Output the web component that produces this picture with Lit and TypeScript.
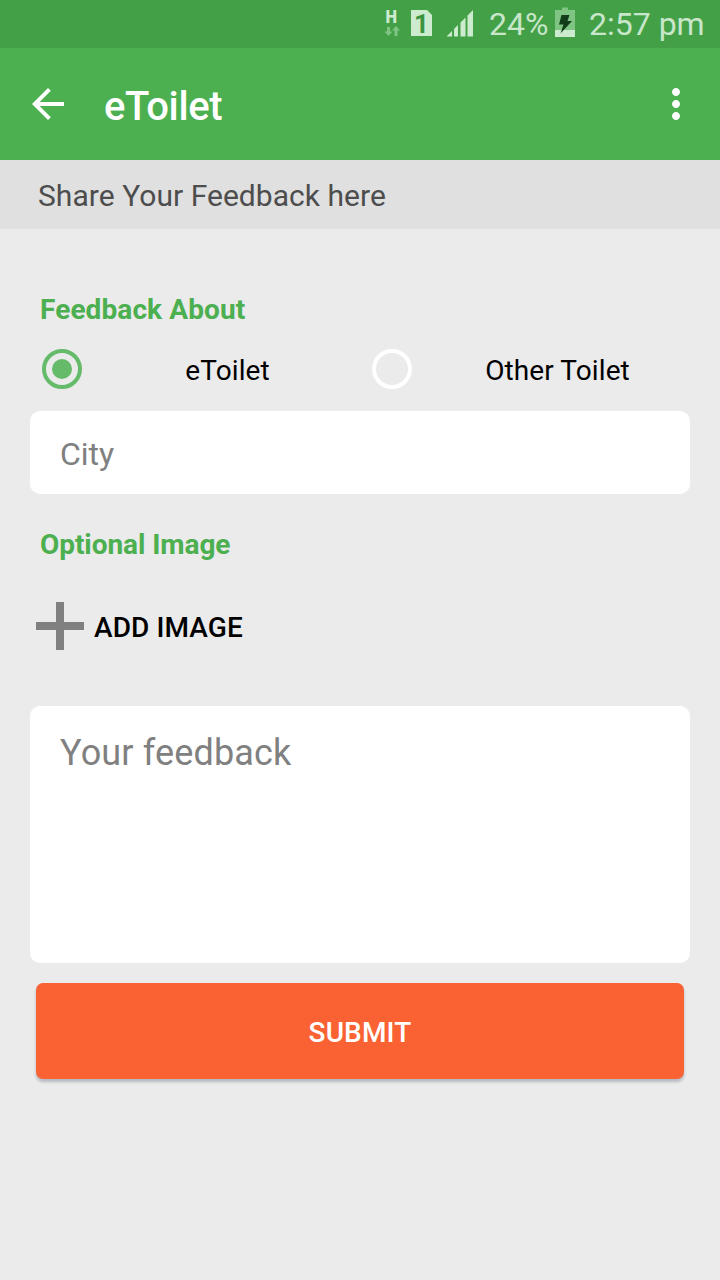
import { LitElement, html, css } from "lit";
import { customElement, state } from "lit/decorators.js";

@customElement("status-bar")
class StatusBar extends LitElement {
  static styles = css`
    :host {
      display: flex;
      height: 48px;
      background: #43a047;
      color: #c8e6c9;
      font-size: 32px;
      line-height: 48px;
      white-space: pre;
    }
    .icons {
      display: block;
      width: 93px;
      height: 48px;
      margin-left: 384px;
    }
    .network {
      font: 900 17.5px Roboto, sans-serif;
    }
    .sim {
      font: 700 26px Roboto, sans-serif;
      fill: #3b9340;
    }
    .percent {
      width: 64px;
      padding-left: 12px;
    }
    .battery {
      display: block;
      width: 20px;
      height: 48px;
      margin-left: 2px;
    }
    .time {
      margin-left: 14px;
    }
  `;
  render() {
    return html`
      <svg class="icons" viewBox="384 0 93 48">
        <g fill="#cdebce">
          <text class="network" x="385.500" y="22.500" textLength="11.500" lengthAdjust="spacingAndGlyphs">H</text>
          <path fill="#7fc482" d="M387 27h3v4.500h2.500l-4 4.500-4-4.500h2.500zM394.500 36v-5.500H392l4-4.500 4 4.500h-2.500V36z" />
          <path d="M411 10h16l5 5v21h-21z" />
          <text class="sim" x="414" y="32.500">1</text>
          <path d="M446.500 36.500l5.500-5.500v5.500zM454 29l4-4v11.500h-4zM460.500 22.500l5-5v19h-5zM467.500 15.500l5.500-5.500v26.500h-5.500z" />
        </g>
      </svg>
      <span class="percent">24%</span>
      <svg class="battery" viewBox="555 0 20 48">
        <path fill="#7fc482" d="M555 10h7V7.500h6V10h7v20h-20z" />
        <path fill="#cdebce" d="M555 30h20v7h-20z" />
        <path fill="#123d18" d="M561.500 15h8l-2 6h4.500l-11.500 12.500 3-9h-4.500z" />
      </svg>
      <span class="time">2:57 pm</span>
    `;
  }
}

@customElement("app-bar")
class AppBar extends LitElement {
  static styles = css`
    :host {
      display: flex;
      align-items: center;
      height: 112px;
      background: #4caf50;
      color: #fff;
    }
    svg {
      display: block;
      width: 48px;
      height: 48px;
      fill: currentColor;
    }
    .back {
      margin-left: 24px;
    }
    .title {
      margin: 0 auto 0 32px;
      padding-top: 6px;
      font-size: 40px;
      font-weight: 500;
      letter-spacing: -0.4px;
      line-height: 48px;
    }
    .more {
      margin-right: 20px;
    }
  `;
  render() {
    return html`
      <svg class="back" viewBox="0 0 24 24">
        <path d="M20 11H7.830l5.590-5.590L12 4l-8 8 8 8 1.410-1.410L7.830 13H20v-2z" />
      </svg>
      <span class="title">eToilet</span>
      <svg class="more" viewBox="0 0 24 24">
        <path d="M12 8c1.100 0 2-.9 2-2s-.9-2-2-2-2 .9-2 2 .9 2 2 2zm0 2c-1.100 0-2 .9-2 2s.9 2 2 2 2-.9 2-2-.9-2-2-2zm0 6c-1.100 0-2 .9-2 2s.9 2 2 2 2-.9 2-2-.9-2-2-2z" />
      </svg>
    `;
  }
}

@customElement("app-root")
class AppRoot extends LitElement {
  static styles = css`
    :host {
      display: block;
      height: 1280px;
      overflow: hidden;
      background: #ebebeb;
      font-family: Roboto, sans-serif;
    }
    .banner {
      height: 69px;
      padding-left: 38px;
      background: #e0e0e0;
      color: #4d4d4d;
      font-size: 30px;
      letter-spacing: 0.04px;
      line-height: 71px;
    }
    .form {
      display: flex;
      flex-direction: column;
      padding: 61px 30px 0;
    }
    .label {
      padding-left: 10px;
      color: #4caf50;
      font-size: 28px;
      font-weight: 700;
      line-height: 40px;
    }
    .about {
      letter-spacing: 0.1px;
    }
    .image {
      letter-spacing: -0.07px;
    }
    .options {
      display: grid;
      grid-template-columns: 1fr 1fr;
      height: 64px;
      margin: 7px 0 10px;
    }
    .option {
      display: flex;
      align-items: center;
      font-size: 28px;
      letter-spacing: 0.1px;
    }
    .option svg {
      width: 64px;
      height: 64px;
    }
    .option span {
      flex: 1;
      padding: 2px 0 0 1px;
      text-align: center;
    }
    .field {
      box-sizing: border-box;
      padding: 0 30px;
      border-radius: 10px;
      background: #fff;
      color: #808080;
    }
    .city {
      height: 83px;
      margin-bottom: 31px;
      font-size: 32px;
      line-height: 86px;
    }
    .add {
      display: flex;
      align-items: center;
      gap: 10px;
      height: 48px;
      margin: 37px 0 56px 6px;
      font-size: 28px;
      font-weight: 500;
      letter-spacing: 0.1px;
    }
    .add svg {
      width: 48px;
      height: 48px;
    }
    .add span {
      padding-top: 2px;
    }
    .message {
      height: 257px;
      font-size: 36px;
      letter-spacing: 0.15px;
      line-height: 95px;
    }
    .submit {
      height: 96px;
      margin: 20px 6px 0;
      border-radius: 7px;
      background: #fb6233;
      box-shadow: 0 3px 3px rgba(70, 80, 110, 0.32);
      color: #fff;
      font-size: 28px;
      font-weight: 500;
      letter-spacing: 0.15px;
      line-height: 100px;
      text-align: center;
    }
  `;

  @state() selected = "eToilet";

  option(name: string) {
    const on = this.selected === name;
    return html`
      <div class="option" @click=${() => (this.selected = name)}>
        <svg viewBox="0 0 64 64">
          <circle cx="32" cy="32" r="18" fill="none" stroke-width="4" stroke=${on ? "#66bb6a" : "#fff"} />
          <circle cx="32" cy="32" r="10" fill=${on ? "#66bb6a" : "none"} />
        </svg>
        <span>${name}</span>
      </div>
    `;
  }

  render() {
    return html`
      <status-bar></status-bar>
      <app-bar></app-bar>
      <div class="banner">Share Your Feedback here</div>
      <div class="form">
        <div class="label about">Feedback About</div>
        <div class="options">${this.option("eToilet")}${this.option("Other Toilet")}</div>
        <div class="field city">City</div>
        <div class="label image">Optional Image</div>
        <div class="add">
          <svg viewBox="0 0 48 48"><path fill="#808080" d="M20 0h8v20h20v8H28v20h-8V28H0v-8h20z" /></svg>
          <span>ADD IMAGE</span>
        </div>
        <div class="field message">Your feedback</div>
        <div class="submit">SUBMIT</div>
      </div>
    `;
  }
}
